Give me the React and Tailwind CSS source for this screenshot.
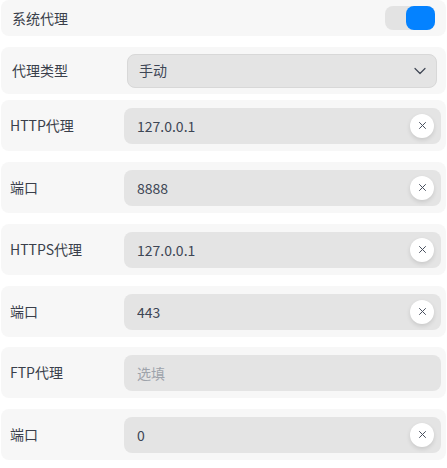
import {useState} from "react";

const font = {fontFamily: '"Noto Sans CJK SC", "Noto Sans", sans-serif'};

const ClearButton = ({onClick}) => (
  <button
    type="button"
    onClick={onClick}
    className="mr-[7px] flex h-6 w-6 shrink-0 items-center justify-center rounded-full bg-white shadow-[0_2px_4px_rgba(0,0,0,0.12)]"
  >
    <svg width="9" height="9" viewBox="0 0 9 9" fill="none">
      <path d="M1.5 1.5l6 6M7.5 1.5l-6 6" stroke="#4a5160" strokeWidth="1" strokeLinecap="round" />
    </svg>
  </button>
);

const InputRow = ({label, value, placeholder, className = ""}) => {
  const [val, setVal] = useState(value || "");
  return (
    <div className={`mx-[1px] flex h-[51px] items-center rounded-lg bg-[#f7f7f7] pr-[5px] ${className}`}>
      <div className="w-[123px] shrink-0 pl-[9px] text-[14px] text-[#3a3f4b]">{label}</div>
      <div className="flex h-9 flex-1 items-center rounded-lg bg-[#e4e4e4]">
        <input
          className="h-full min-w-0 flex-1 bg-transparent pl-[13px] text-[14px] text-[#3d4655] outline-none placeholder:text-[#9ea3ab]"
          style={font}
          value={val}
          placeholder={placeholder}
          onChange={(e) => setVal(e.target.value)}
        />
        {val && <ClearButton onClick={() => setVal("")} />}
      </div>
    </div>
  );
};

export default function App() {
  const [on, setOn] = useState(true);

  return (
    <div className="flex w-[447px] flex-col bg-white" style={font}>
      <div className="mx-[1px] flex h-9 items-center justify-between rounded-lg bg-[#f7f7f7] pl-[11px] pr-[11px]">
        <span className="text-[14px] text-[#3a3f4b]">系统代理</span>
        <button
          type="button"
          onClick={() => setOn(!on)}
          className={`flex h-6 w-[50px] rounded-lg bg-[#e3e3e3] ${on ? "justify-end" : "justify-start"}`}
        >
          <span className={`h-6 w-[29px] rounded-lg ${on ? "bg-[#0482ff]" : "bg-white"}`} />
        </button>
      </div>

      <div className="mx-[1px] mt-[11px] flex h-[47px] items-center rounded-lg bg-[#f7f7f7] pr-[9px]">
        <div className="w-[126px] shrink-0 pl-[11px] text-[14px] text-[#3a3f4b]">代理类型</div>
        <div className="flex h-[34px] flex-1 items-center justify-between rounded-lg border border-[#d8d8d8] bg-[#e4e4e4] pl-[11px] pr-[10px]">
          <span className="text-[14px] text-[#3d4655]">手动</span>
          <svg width="12" height="8" viewBox="0 0 12 8" fill="none">
            <path d="M1 1.5l5 5 5-5" stroke="#3f4654" strokeWidth="1.2" strokeLinecap="round" strokeLinejoin="round" />
          </svg>
        </div>
      </div>

      <InputRow className="mt-[6px]" label="HTTP代理" value="127.0.0.1" />
      <InputRow className="mt-[11px]" label="端口" value="8888" />
      <InputRow className="mt-[11px]" label="HTTPS代理" value="127.0.0.1" />
      <InputRow className="mt-[11px]" label="端口" value="443" />
      <InputRow className="mt-[10px]" label="FTP代理" placeholder="选填" />
      <InputRow className="mt-[11px]" label="端口" value="0" />
    </div>
  );
}
